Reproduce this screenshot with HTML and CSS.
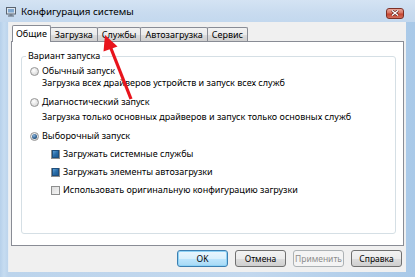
FILE: index.html
```html
<!DOCTYPE html>
<html lang="ru">
<head>
<meta charset="utf-8">
<title>Конфигурация системы</title>
<link rel="stylesheet" href="styles.css">
</head>
<body>
<div class="window">
  <div class="titlebar">
    <svg class="app-icon" width="11" height="10" viewBox="0 0 11 10">
      <rect x="0.5" y="0.5" width="9" height="6.5" fill="#dfe6ee" stroke="#5a6470"/>
      <rect x="2" y="2" width="6" height="3.5" fill="#7fa7cf"/>
      <rect x="3.5" y="7.5" width="3" height="1" fill="#5a6470"/>
      <rect x="2" y="8.5" width="6" height="1" fill="#5a6470"/>
    </svg>
    <span class="title">Конфигурация системы</span>
    <div class="close">
      <svg width="8" height="6" viewBox="0 0 8 6">
        <path d="M1 0.5 L7 5.5 M7 0.5 L1 5.5" stroke="#5a1d16" stroke-width="2.6"/>
        <path d="M1 0.5 L7 5.5 M7 0.5 L1 5.5" stroke="#ffffff" stroke-width="1.4"/>
      </svg>
    </div>
  </div>
  <div class="client">
    <div class="tabs">
      <div class="tab active">Общие</div>
      <div class="tab">Загрузка</div>
      <div class="tab">Службы</div>
      <div class="tab">Автозагрузка</div>
      <div class="tab">Сервис</div>
    </div>
    <div class="panel">
      <div class="group">
        <div class="group-title">Вариант запуска</div>
        <div class="opt opt-first"><span class="radio"></span>Обычный запуск</div>
        <div class="desc">Загрузка всех драйверов устройств и запуск всех служб</div>
        <div class="opt opt-second"><span class="radio"></span>Диагностический запуск</div>
        <div class="desc desc-second">Загрузка только основных драйверов и запуск только основных служб</div>
        <div class="opt opt-third"><span class="radio checked"></span>Выборочный запуск</div>
        <div class="sub"><span class="check filled"></span>Загружать системные службы</div>
        <div class="sub"><span class="check filled"></span>Загружать элементы автозагрузки</div>
        <div class="sub"><span class="check"></span>Использовать оригинальную конфигурацию загрузки</div>
      </div>
    </div>
    <div class="buttons">
      <div class="btn default">OK</div>
      <div class="btn">Отмена</div>
      <div class="btn disabled">Применить</div>
      <div class="btn">Справка</div>
    </div>
  </div>
  <svg class="arrow" width="415" height="277" viewBox="0 0 415 277">
    <line x1="131" y1="99" x2="110" y2="46" stroke="#e8141c" stroke-width="3.2"/>
    <polygon points="105,35 117.5,46.5 103.5,51.5" fill="#e8141c"/>
  </svg>
</div>
</body>
</html>
```

FILE: styles.css
```css
* { box-sizing: border-box; }
html, body { margin: 0; padding: 0; }
body {
  font-family: "Noto Sans", "Open Sans", sans-serif;
  font-size: 9px;
  color: #000;
  background: #b9d3ec;
}
.window {
  position: relative;
  width: 415px;
  height: 277px;
  overflow: hidden;
  background: linear-gradient(to right, #b6d0ea 0, #c6dcf1 4px, #bcd4ec 8px, #c3d8ee 60%, #a9c9e8 100%);
  display: flex;
  flex-direction: column;
}
.titlebar {
  height: 22px;
  display: flex;
  align-items: center;
  padding: 1px 11px 0 6px;
  background: linear-gradient(to bottom, #d4e3f3 0, #c8dbef 60%, #c3d8ee 100%);
}
.app-icon { flex: none; margin-right: 4px; }
.title { font-size: 9.8px; color: #000; flex: 1; }
.close {
  width: 18px;
  height: 11px;
  border: 1px solid #7d3026;
  border-radius: 3px;
  background: linear-gradient(to bottom, #e8a89c 0, #d6715f 45%, #c4422e 55%, #d2705c 100%);
  display: flex;
  align-items: center;
  justify-content: center;
  margin-top: 3px;
}
.client {
  height: 250px;
  margin: 0 9px 0 8px;
  background: #f0f0f0;
  padding: 3px 2px 0 2px;
  border-left: 1px solid #e8eef4;
}
.tabs {
  display: flex;
  align-items: flex-end;
  height: 16px;
  margin-left: 1px;
}
.tab {
  position: relative;
  height: 14px;
  padding: 0 4px;
  margin-right: -1px;
  border: 1px solid #898c95;
  border-bottom: none;
  border-radius: 2px 2px 0 0;
  background: linear-gradient(to bottom, #f2f2f2 0, #ebebeb 50%, #dddddd 51%, #cfcfcf 100%);
  line-height: 13px;
  white-space: nowrap;
}
.tab.active {
  height: 17px;
  margin-bottom: -1px;
  padding: 0 3px;
  background: #fff;
  z-index: 1;
  line-height: 15px;
}
.panel {
  height: 205px;
  border: 1px solid #898c95;
  background: #fff;
  padding: 0;
}
.group {
  height: 178px;
  margin: 14px 7px 0 9px;
  border: 1px solid #d5dfe5;
  border-radius: 3px;
}
.group-title {
  width: max-content;
  margin: -7px 0 0 4px;
  padding: 0 2px;
  background: #fff;
  line-height: 12px;
}
.opt, .desc, .sub {
  display: flex;
  align-items: center;
  height: 12px;
  line-height: 12px;
  white-space: nowrap;
}
.opt { padding-left: 8px; }
.opt-first { margin-top: 3px; }
.opt-second { margin-top: 7px; }
.opt-third { margin-top: 7px; }
.desc { padding-left: 20px; }
.desc-second { margin-top: 3px; }
.sub { padding-left: 29px; margin-top: 6px; }
.sub:first-of-type { margin-top: 5px; }
.radio {
  flex: none;
  width: 9px;
  height: 9px;
  border-radius: 50%;
  border: 1px solid #959595;
  background: radial-gradient(circle at 40% 35%, #ffffff 0, #e6e6e6 50%, #cfcfcf 100%);
  margin-right: 3px;
  display: flex;
  align-items: center;
  justify-content: center;
}
.radio.checked::after {
  content: "";
  width: 5px;
  height: 5px;
  border-radius: 50%;
  background: radial-gradient(circle at 40% 35%, #8fb6dc 0, #2a5c8c 60%, #1c3d5e 100%);
}
.check {
  flex: none;
  width: 9px;
  height: 9px;
  border: 1px solid #8e8f8f;
  background: linear-gradient(135deg, #dcdcdc 0, #f5f5f5 100%);
  margin-right: 3px;
  display: flex;
  align-items: center;
  justify-content: center;
}
.check.filled::after {
  content: "";
  width: 6px;
  height: 6px;
  background: linear-gradient(135deg, #5fa0d6 0, #2a6ea9 50%, #1b5a93 100%);
  border: 1px solid #1f4f7d;
}
.buttons {
  display: flex;
  justify-content: flex-end;
  gap: 7px;
  margin-top: 4px;
  padding-right: 2px;
}
.btn {
  width: 51px;
  height: 17px;
  border: 1px solid #707070;
  border-radius: 3px;
  background: linear-gradient(to bottom, #f2f2f2 0, #ebebeb 50%, #dddddd 51%, #cfcfcf 100%);
  display: flex;
  align-items: center;
  justify-content: center;
  font-size: 8.5px;
}
.btn.default {
  border-color: #3c7fb1;
  box-shadow: inset 0 0 0 1px #8fd3f6;
  background: linear-gradient(to bottom, #eaf6fd 0, #d9f0fc 50%, #bee6fd 51%, #a7d9f5 100%);
}
.btn.disabled {
  border-color: #adb2b5;
  background: #f4f4f4;
  color: #8d8d8d;
}
.arrow {
  position: absolute;
  left: 0;
  top: 0;
  pointer-events: none;
}
```
